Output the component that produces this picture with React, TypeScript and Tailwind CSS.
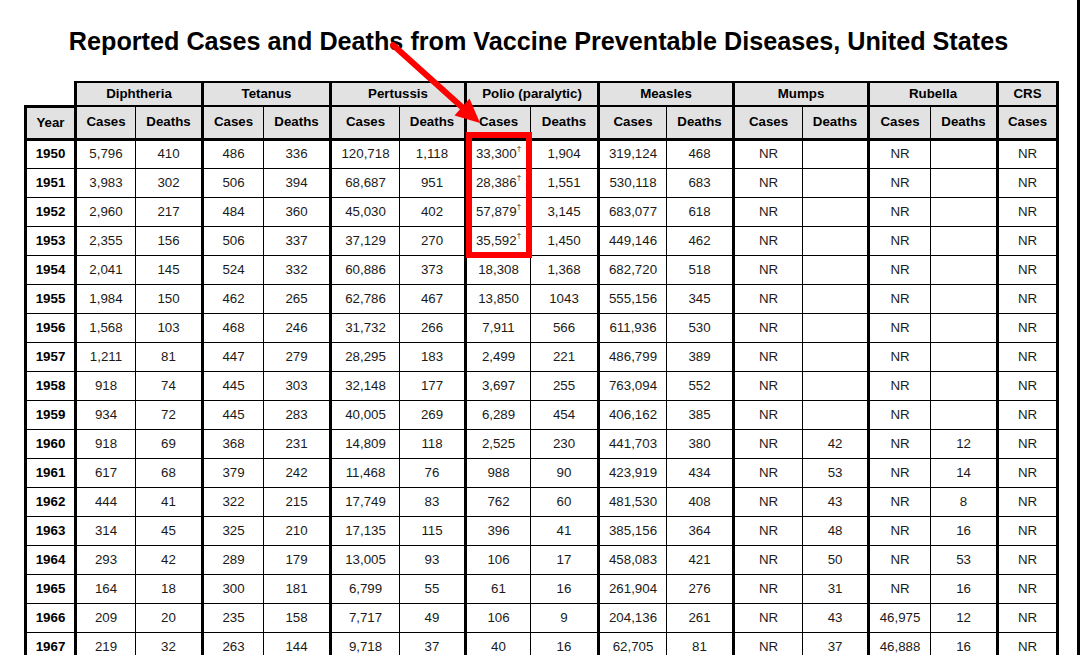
import React from 'react';

const widths = [50, 60, 67, 61, 67, 69, 66, 65, 68, 68, 67, 69, 66, 62, 67, 60];

const groups = ['Diphtheria', 'Tetanus', 'Pertussis', 'Polio (paralytic)', 'Measles', 'Mumps', 'Rubella', 'CRS'];

const subHeads = ['Cases', 'Deaths', 'Cases', 'Deaths', 'Cases', 'Deaths', 'Cases', 'Deaths', 'Cases', 'Deaths', 'Cases', 'Deaths', 'Cases', 'Deaths', 'Cases'];

// year, then 15 values; a trailing "+" marks a dagger footnote
const rows: string[][] = [
    ['1950', '5,796', '410', '486', '336', '120,718', '1,118', '33,300+', '1,904', '319,124', '468', 'NR', '', 'NR', '', 'NR'],
    ['1951', '3,983', '302', '506', '394', '68,687', '951', '28,386+', '1,551', '530,118', '683', 'NR', '', 'NR', '', 'NR'],
    ['1952', '2,960', '217', '484', '360', '45,030', '402', '57,879+', '3,145', '683,077', '618', 'NR', '', 'NR', '', 'NR'],
    ['1953', '2,355', '156', '506', '337', '37,129', '270', '35,592+', '1,450', '449,146', '462', 'NR', '', 'NR', '', 'NR'],
    ['1954', '2,041', '145', '524', '332', '60,886', '373', '18,308', '1,368', '682,720', '518', 'NR', '', 'NR', '', 'NR'],
    ['1955', '1,984', '150', '462', '265', '62,786', '467', '13,850', '1043', '555,156', '345', 'NR', '', 'NR', '', 'NR'],
    ['1956', '1,568', '103', '468', '246', '31,732', '266', '7,911', '566', '611,936', '530', 'NR', '', 'NR', '', 'NR'],
    ['1957', '1,211', '81', '447', '279', '28,295', '183', '2,499', '221', '486,799', '389', 'NR', '', 'NR', '', 'NR'],
    ['1958', '918', '74', '445', '303', '32,148', '177', '3,697', '255', '763,094', '552', 'NR', '', 'NR', '', 'NR'],
    ['1959', '934', '72', '445', '283', '40,005', '269', '6,289', '454', '406,162', '385', 'NR', '', 'NR', '', 'NR'],
    ['1960', '918', '69', '368', '231', '14,809', '118', '2,525', '230', '441,703', '380', 'NR', '42', 'NR', '12', 'NR'],
    ['1961', '617', '68', '379', '242', '11,468', '76', '988', '90', '423,919', '434', 'NR', '53', 'NR', '14', 'NR'],
    ['1962', '444', '41', '322', '215', '17,749', '83', '762', '60', '481,530', '408', 'NR', '43', 'NR', '8', 'NR'],
    ['1963', '314', '45', '325', '210', '17,135', '115', '396', '41', '385,156', '364', 'NR', '48', 'NR', '16', 'NR'],
    ['1964', '293', '42', '289', '179', '13,005', '93', '106', '17', '458,083', '421', 'NR', '50', 'NR', '53', 'NR'],
    ['1965', '164', '18', '300', '181', '6,799', '55', '61', '16', '261,904', '276', 'NR', '31', 'NR', '16', 'NR'],
    ['1966', '209', '20', '235', '158', '7,717', '49', '106', '9', '204,136', '261', 'NR', '43', '46,975', '12', 'NR'],
    ['1967', '219', '32', '263', '144', '9,718', '37', '40', '16', '62,705', '81', 'NR', '37', '46,888', '16', 'NR'],
];

// columns that open a disease group get the heavy left rule
const thickLeft = (i: number) => i === 0 || i % 2 === 1;

function cellEdges(i: number) {
    let c = 'border border-black';
    if (thickLeft(i)) c += ' border-l-[3px]';
    if (i === 0 || i === 15) c += ' border-r-[3px]';
    return c;
}

function Value({ v }: { v: string }) {
    if (v.endsWith('+')) {
        return (
            <span>
                {v.slice(0, -1)}
                <span className="text-[8px] align-top relative -top-[1px]">†</span>
            </span>
        );
    }
    return <span>{v}</span>;
}

export default function App() {
    return (
        <div className="w-[1080px] h-[655px] overflow-hidden bg-white flex font-['Liberation_Sans',Arial,sans-serif]">
            <div className="relative flex-1 flex flex-col">
                {/* Title */}
                <h1 className="mt-[27px] text-center text-[25.2px] leading-[29px] font-bold text-black whitespace-nowrap">
                    Reported Cases and Deaths from Vaccine Preventable Diseases, United States
                </h1>

                {/* Table */}
                <table className="mt-[25px] ml-[24px] border-collapse table-fixed w-[1032px] text-[13.3px] text-[#1a1a1a]">
                    <colgroup>
                        {widths.map((w, i) => (
                            <col key={i} style={{ width: w }} />
                        ))}
                    </colgroup>
                    <thead>
                        <tr className="h-[24px]">
                            <th className="border-none bg-white" />
                            {groups.map((g, i) => (
                                <th
                                    key={g}
                                    colSpan={g === 'CRS' ? 1 : 2}
                                    className={`border border-black border-t-2 border-b-2 border-l-[3px] bg-[#e2e2e2] font-bold text-black p-0 ${i === groups.length - 1 ? 'border-r-[3px]' : ''}`}
                                >
                                    {g}
                                </th>
                            ))}
                        </tr>
                        <tr className="h-[33px]">
                            <th className={`${cellEdges(0)} border-t-[3px] border-b-[3px] bg-[#e2e2e2] font-bold text-black p-0`}>Year</th>
                            {subHeads.map((s, i) => (
                                <th
                                    key={i}
                                    className={`${cellEdges(i + 1)} border-t-2 border-b-[3px] bg-[#e2e2e2] font-bold text-black p-0`}
                                >
                                    {s}
                                </th>
                            ))}
                        </tr>
                    </thead>
                    <tbody>
                        {rows.map((r) => (
                            <tr key={r[0]} className="h-[29px]">
                                {r.map((v, i) => (
                                    <td
                                        key={i}
                                        className={`${cellEdges(i)} text-center p-0 ${i === 0 ? 'font-bold text-black' : ''}`}
                                    >
                                        <Value v={v} />
                                    </td>
                                ))}
                            </tr>
                        ))}
                    </tbody>
                </table>

                {/* Highlight box around early polio cases */}
                <div className="absolute left-[466px] top-[132px] w-[66px] h-[126px] border-[6px] border-[#ff0000]" />

                {/* Pointer arrow */}
                <svg className="absolute left-0 top-0 pointer-events-none" width="1077" height="655">
                    <line x1="393" y1="45" x2="463" y2="108" stroke="#ff0000" strokeWidth="6" strokeLinecap="round" />
                    <polygon points="480,123 454.5,115.5 469.5,98.5" fill="#ff0000" />
                </svg>
            </div>
            <div className="w-[3px] h-full bg-black" />
        </div>
    );
}
